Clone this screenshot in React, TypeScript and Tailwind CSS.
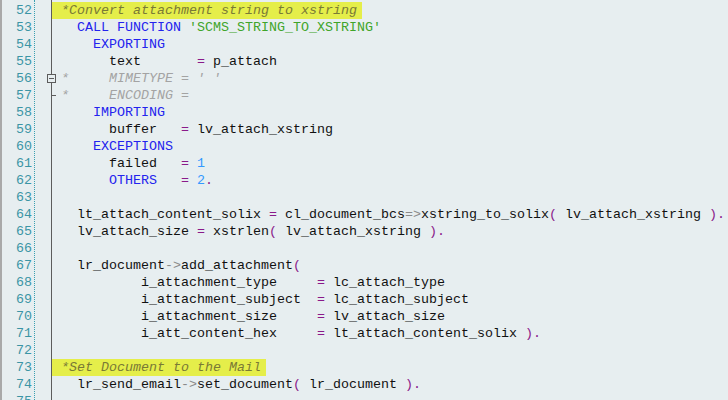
import React from 'react';

type Seg = [string, string];

const N = 'text-[#111111]';
const K = 'text-[#2323ee]';
const S = 'text-[#3fa52a]';
const O = 'text-[#8a1a8a]';
const G = 'text-[#8a8a8a]';
const NUM = 'text-[#3399ff]';
const C = 'text-[#7a7a36] italic';
const CG = 'text-[#a3a3a3] italic';

type Line = { n: number; segs: Seg[]; hl?: boolean };

const lines: Line[] = [
  { n: 52, hl: true, segs: [['*Convert attachment string to xstring', C]] },
  { n: 53, segs: [['  ', N], ['CALL FUNCTION ', K], ["'SCMS_STRING_TO_XSTRING'", S]] },
  { n: 54, segs: [['    ', N], ['EXPORTING', K]] },
  { n: 55, segs: [['      text       ', N], ['=', O], [' p_attach', N]] },
  { n: 56, segs: [['*     MIMETYPE = \' \'', CG]] },
  { n: 57, segs: [['*     ENCODING =', CG]] },
  { n: 58, segs: [['    ', N], ['IMPORTING', K]] },
  { n: 59, segs: [['      buffer   ', N], ['=', O], [' lv_attach_xstring', N]] },
  { n: 60, segs: [['    ', N], ['EXCEPTIONS', K]] },
  { n: 61, segs: [['      failed   ', N], ['=', O], [' ', N], ['1', NUM]] },
  { n: 62, segs: [['      ', N], ['OTHERS', K], ['   ', N], ['=', O], [' ', N], ['2', NUM], ['.', O]] },
  { n: 63, segs: [] },
  {
    n: 64,
    segs: [
      ['  lt_attach_content_solix ', N],
      ['=', O],
      [' cl_document_bcs', N],
      ['=>', G],
      ['xstring_to_solix', N],
      ['(', O],
      [' lv_attach_xstring ', N],
      [')', O],
      ['.', O],
    ],
  },
  {
    n: 65,
    segs: [
      ['  lv_attach_size ', N],
      ['=', O],
      [' xstrlen', N],
      ['(', O],
      [' lv_attach_xstring ', N],
      [')', O],
      ['.', O],
    ],
  },
  { n: 66, segs: [] },
  { n: 67, segs: [['  lr_document', N], ['->', G], ['add_attachment', N], ['(', O]] },
  { n: 68, segs: [['          i_attachment_type     ', N], ['=', O], [' lc_attach_type', N]] },
  { n: 69, segs: [['          i_attachment_subject  ', N], ['=', O], [' lc_attach_subject', N]] },
  { n: 70, segs: [['          i_attachment_size     ', N], ['=', O], [' lv_attach_size', N]] },
  {
    n: 71,
    segs: [['          i_att_content_hex     ', N], ['=', O], [' lt_attach_content_solix ', N], [')', O], ['.', O]],
  },
  { n: 72, segs: [] },
  { n: 73, hl: true, segs: [['*Set Document to the Mail', C]] },
  {
    n: 74,
    segs: [
      ['  lr_send_email', N],
      ['->', G],
      ['set_document', N],
      ['(', O],
      [' lr_document ', N],
      [')', O],
      ['.', O],
    ],
  },
  { n: 75, segs: [] },
];

export default function App() {
  return (
    <div className="relative w-[728px] h-[400px] overflow-hidden bg-[#e7eef0] border-l-2 border-[#a9a9a9] flex font-['Liberation_Mono','Courier_New',monospace] text-[13.33px]">
      {/* line numbers */}
      <div className="w-[33px] shrink-0 pt-[2px] pr-[2px] border-r border-dotted border-[#3a9fb0] flex flex-col items-end">
        {lines.map((l) => (
          <div key={l.n} className="h-[17px] leading-[17px] text-[#3b95a5]">
            {l.n}
          </div>
        ))}
      </div>
      {/* fold column */}
      <div className="w-[16px] shrink-0" />
      {/* code */}
      <div className="flex-1 pt-[2px] border-l border-[#5c5c5c] flex flex-col">
        {lines.map((l) => (
          <div key={l.n} className="h-[17px] leading-[17px] whitespace-pre flex">
            <span className={l.hl ? 'inline-block h-[17px] pl-[9px] pr-[5px] bg-[#e5ee4a]' : 'inline-block h-[17px] pl-[9px]'}>
              {l.segs.map((s, i) => (
                <span key={i} className={s[1]}>
                  {s[0]}
                </span>
              ))}
            </span>
          </div>
        ))}
      </div>
      {/* fold marker */}
      <div className="absolute left-[45px] top-[74px] w-[9px] h-[9px] border border-[#5c5c5c] bg-[#e7eef0] flex items-center justify-center">
        <div className="w-[5px] h-px bg-[#5c5c5c]" />
      </div>
      <div className="absolute left-[50px] top-[95px] w-[4px] h-px bg-[#5c5c5c]" />
    </div>
  );
}
